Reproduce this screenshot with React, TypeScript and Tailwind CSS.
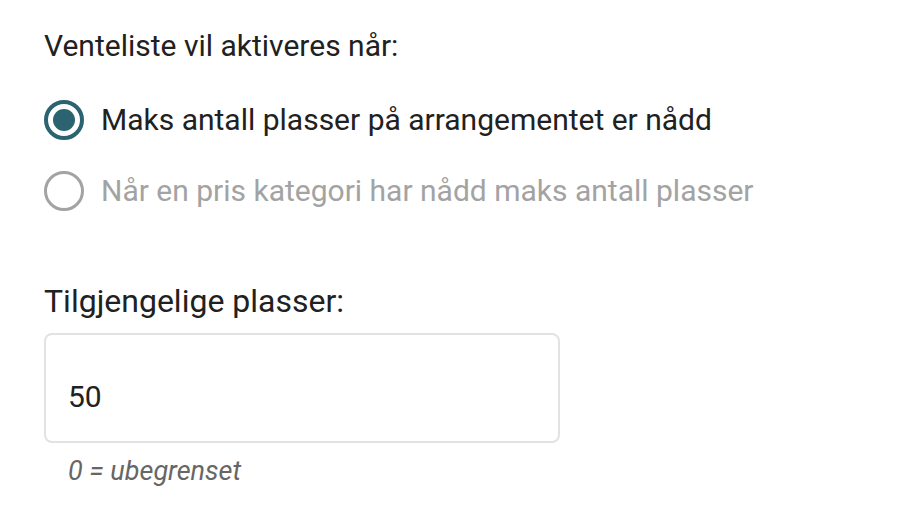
import React, { useState } from 'react';

const options = [
  { id: 'event', label: 'Maks antall plasser på arrangementet er nådd' },
  { id: 'category', label: 'Når en pris kategori har nådd maks antall plasser' },
];

const App: React.FC = () => {
  const [selected] = useState('event');
  const [seats, setSeats] = useState('50');

  return (
    <div className="min-h-screen bg-white pt-[26px] pl-[44px] font-['Roboto',sans-serif] text-[#212121]">
      <h3 className="h-[40px] leading-[40px] text-[30px]">Venteliste vil aktiveres når:</h3>

      <div className="mt-[34px] flex flex-col gap-[31px]">
        {options.map((opt) => {
          const active = opt.id === selected;
          return (
            <label key={opt.id} className="flex h-[40px] items-center gap-[17px]">
              <span
                className={
                  active
                    ? 'flex h-[40px] w-[40px] items-center justify-center rounded-full border-[4px] border-[#2b6470]'
                    : 'flex h-[40px] w-[40px] items-center justify-center rounded-full border-[3px] border-[#a3a3a3]'
                }
              >
                {active && <span className="h-[22px] w-[22px] rounded-full bg-[#2b6470]" />}
              </span>
              <span className={active ? 'text-[30px] leading-[40px]' : 'text-[30px] leading-[40px] text-[#a3a3a3]'}>
                {opt.label}
              </span>
            </label>
          );
        })}
      </div>

      <div className="mt-[70px] h-[40px] text-[32px] leading-[40px]">Tilgjengelige plasser:</div>

      <input
        value={seats}
        onChange={(e) => setSeats(e.target.value)}
        className="mt-[12px] block h-[110px] w-[516px] rounded-[8px] border-2 border-[#e2e2e2] px-[22px] pt-[16px] text-[30px] text-[#212121] outline-none"
      />

      <p className="mt-[12px] pl-[24px] text-[27px] italic leading-[32px] text-[#666666]">0 = ubegrenset</p>
    </div>
  );
};

export default App;
